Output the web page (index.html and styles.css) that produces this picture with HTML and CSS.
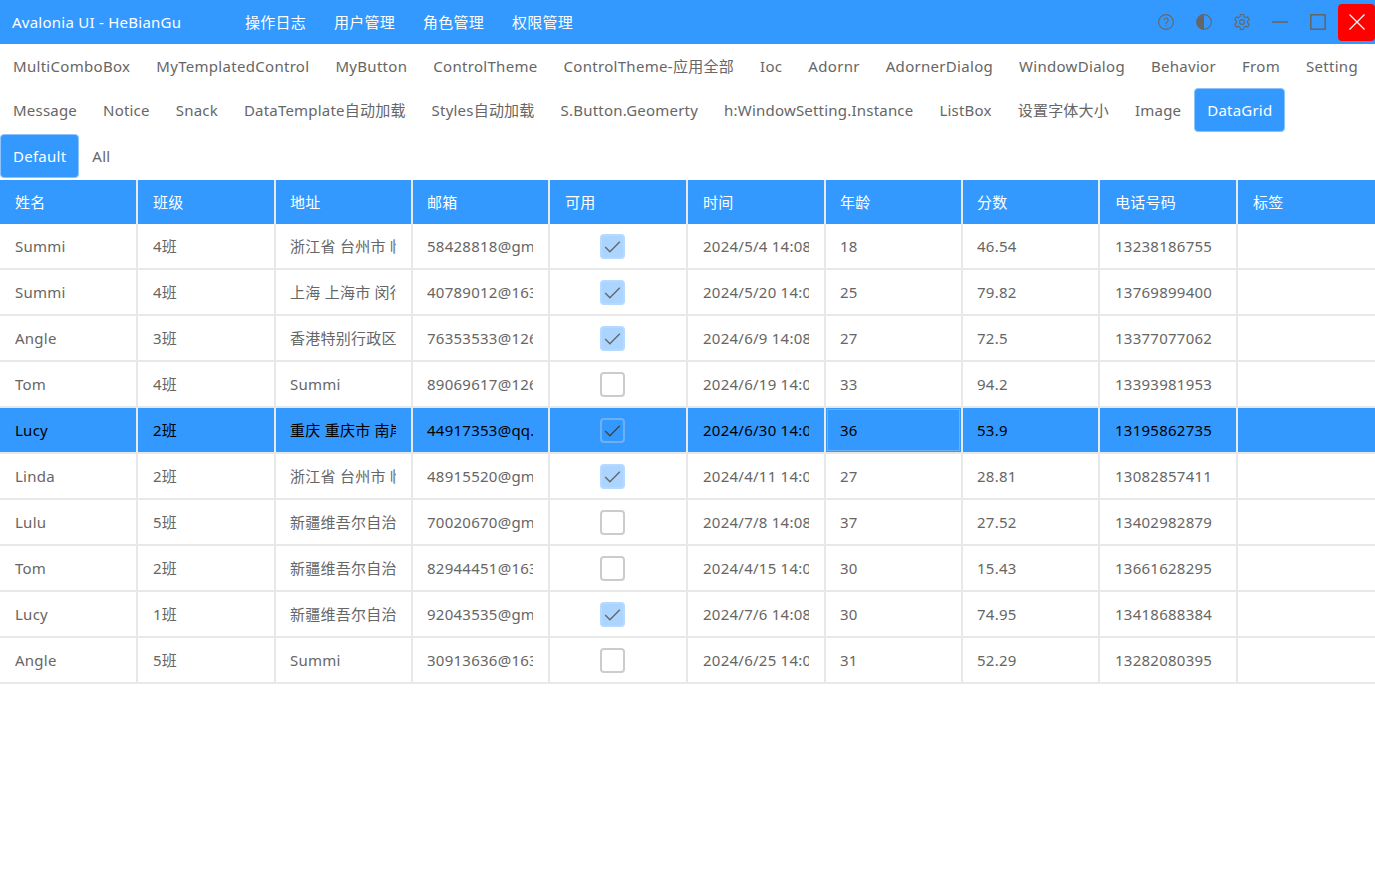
FILE: index.html
```html
<!DOCTYPE html>
<html lang="zh">
<head>
<meta charset="utf-8">
<title>Avalonia UI - HeBianGu</title>
<link rel="stylesheet" href="styles.css">
</head>
<body>
<header class="titlebar">
  <div class="title">Avalonia UI - HeBianGu</div>
  <nav class="menu"><span>操作日志</span><span>用户管理</span><span>角色管理</span><span>权限管理</span></nav>
  <div class="winbtns">
    <svg class="ico i1" viewBox="0 0 16 16"><circle cx="8" cy="8" r="7.4"/><path d="M5.900 6.200a2.100 2.100 0 1 1 3.300 1.700c-.8.500-1.200.9-1.200 1.800"/><path d="M8 11.200v1.200"/></svg>
    <svg class="ico i2" viewBox="0 0 16 16"><circle cx="8" cy="8" r="7.400"/><path class="fill" d="M8 .6a7.400 7.400 0 0 0 0 14.800z"/></svg>
    <svg class="ico i3" viewBox="0 0 16 16"><path d="M6.050 2.640L6.420.57H9.580L9.950 2.640L11.660 3.630L13.650 2.920L15.230 5.650L13.610 7.010V8.990L15.230 10.350L13.650 13.080L11.660 12.370L9.950 13.360L9.580 15.430H6.420L6.050 13.360L4.340 12.370L2.350 13.080L.77 10.350L2.390 8.990V7.010L.77 5.650L2.350 2.920L4.340 3.630Z"/><circle cx="8" cy="8" r="2.400"/></svg>
    <svg class="ico i4" viewBox="0 0 16 16"><path d="M0 8h16"/></svg>
    <svg class="ico i5" viewBox="0 0 16 16"><rect x=".8" y=".8" width="14.400" height="14.400"/></svg>
    <div class="close"><svg viewBox="0 0 16 16"><path d="M.5.500l15 15M15.500.500l-15 15"/></svg></div>
  </div>
</header>
<div class="tabs t1">
  <span>MultiComboBox</span><span>MyTemplatedControl</span><span>MyButton</span><span>ControlTheme</span><span>ControlTheme-应用全部</span><span>Ioc</span><span>Adornr</span><span>AdornerDialog</span><span>WindowDialog</span><span>Behavior</span><span>From</span><span>Setting</span>
</div>
<div class="tabs t2">
  <span>Message</span><span>Notice</span><span>Snack</span><span>DataTemplate自动加载</span><span>Styles自动加载</span><span>S.Button.Geomerty</span><span>h:WindowSetting.Instance</span><span>ListBox</span><span>设置字体大小</span><span>Image</span><span class="on">DataGrid</span>
</div>
<div class="tabs t3">
  <span class="on">Default</span><span>All</span>
</div>
<main class="grid">
  <div class="row head">
    <div class="c"><b>姓名</b></div><div class="c"><b>班级</b></div><div class="c"><b>地址</b></div><div class="c"><b>邮箱</b></div><div class="c"><b>可用</b></div><div class="c"><b>时间</b></div><div class="c"><b>年龄</b></div><div class="c"><b>分数</b></div><div class="c"><b>电话号码</b></div><div class="c"><b>标签</b></div>
  </div>
  <div class="row">
    <div class="c"><b>Summi</b></div><div class="c"><b>4班</b></div><div class="c"><b>浙江省 台州市 临海市</b></div><div class="c"><b>58428818@gmail.com</b></div><div class="c k"><i class="box yes"><svg viewBox="0 0 24 24"><path d="M5 12.500l4.500 4.500L19 7.500"/></svg></i></div><div class="c"><b>2024/5/4 14:08:12</b></div><div class="c"><b>18</b></div><div class="c"><b>46.54</b></div><div class="c"><b>13238186755</b></div><div class="c"></div>
  </div>
  <div class="row">
    <div class="c"><b>Summi</b></div><div class="c"><b>4班</b></div><div class="c"><b>上海 上海市 闵行区</b></div><div class="c"><b>40789012@163.com</b></div><div class="c k"><i class="box yes"><svg viewBox="0 0 24 24"><path d="M5 12.500l4.500 4.500L19 7.500"/></svg></i></div><div class="c"><b>2024/5/20 14:08:12</b></div><div class="c"><b>25</b></div><div class="c"><b>79.82</b></div><div class="c"><b>13769899400</b></div><div class="c"></div>
  </div>
  <div class="row">
    <div class="c"><b>Angle</b></div><div class="c"><b>3班</b></div><div class="c"><b>香港特别行政区</b></div><div class="c"><b>76353533@126.com</b></div><div class="c k"><i class="box yes"><svg viewBox="0 0 24 24"><path d="M5 12.500l4.500 4.500L19 7.500"/></svg></i></div><div class="c"><b>2024/6/9 14:08:12</b></div><div class="c"><b>27</b></div><div class="c"><b>72.5</b></div><div class="c"><b>13377077062</b></div><div class="c"></div>
  </div>
  <div class="row">
    <div class="c"><b>Tom</b></div><div class="c"><b>4班</b></div><div class="c"><b>Summi</b></div><div class="c"><b>89069617@126.com</b></div><div class="c k"><i class="box"></i></div><div class="c"><b>2024/6/19 14:08:12</b></div><div class="c"><b>33</b></div><div class="c"><b>94.2</b></div><div class="c"><b>13393981953</b></div><div class="c"></div>
  </div>
  <div class="row sel">
    <div class="c"><b>Lucy</b></div><div class="c"><b>2班</b></div><div class="c"><b>重庆 重庆市 南岸区</b></div><div class="c"><b>44917353@qq.com</b></div><div class="c k"><i class="box yes"><svg viewBox="0 0 24 24"><path d="M5 12.500l4.500 4.500L19 7.500"/></svg></i></div><div class="c"><b>2024/6/30 14:08:12</b></div><div class="c cur"><b>36</b></div><div class="c"><b>53.9</b></div><div class="c"><b>13195862735</b></div><div class="c"></div>
  </div>
  <div class="row">
    <div class="c"><b>Linda</b></div><div class="c"><b>2班</b></div><div class="c"><b>浙江省 台州市 临海市</b></div><div class="c"><b>48915520@gmail.com</b></div><div class="c k"><i class="box yes"><svg viewBox="0 0 24 24"><path d="M5 12.500l4.500 4.500L19 7.500"/></svg></i></div><div class="c"><b>2024/4/11 14:08:12</b></div><div class="c"><b>27</b></div><div class="c"><b>28.81</b></div><div class="c"><b>13082857411</b></div><div class="c"></div>
  </div>
  <div class="row">
    <div class="c"><b>Lulu</b></div><div class="c"><b>5班</b></div><div class="c"><b>新疆维吾尔自治区</b></div><div class="c"><b>70020670@gmail.com</b></div><div class="c k"><i class="box"></i></div><div class="c"><b>2024/7/8 14:08:12</b></div><div class="c"><b>37</b></div><div class="c"><b>27.52</b></div><div class="c"><b>13402982879</b></div><div class="c"></div>
  </div>
  <div class="row">
    <div class="c"><b>Tom</b></div><div class="c"><b>2班</b></div><div class="c"><b>新疆维吾尔自治区</b></div><div class="c"><b>82944451@163.com</b></div><div class="c k"><i class="box"></i></div><div class="c"><b>2024/4/15 14:08:12</b></div><div class="c"><b>30</b></div><div class="c"><b>15.43</b></div><div class="c"><b>13661628295</b></div><div class="c"></div>
  </div>
  <div class="row">
    <div class="c"><b>Lucy</b></div><div class="c"><b>1班</b></div><div class="c"><b>新疆维吾尔自治区</b></div><div class="c"><b>92043535@gmail.com</b></div><div class="c k"><i class="box yes"><svg viewBox="0 0 24 24"><path d="M5 12.500l4.500 4.500L19 7.500"/></svg></i></div><div class="c"><b>2024/7/6 14:08:12</b></div><div class="c"><b>30</b></div><div class="c"><b>74.95</b></div><div class="c"><b>13418688384</b></div><div class="c"></div>
  </div>
  <div class="row">
    <div class="c"><b>Angle</b></div><div class="c"><b>5班</b></div><div class="c"><b>Summi</b></div><div class="c"><b>30913636@163.com</b></div><div class="c k"><i class="box"></i></div><div class="c"><b>2024/6/25 14:08:12</b></div><div class="c"><b>31</b></div><div class="c"><b>52.29</b></div><div class="c"><b>13282080395</b></div><div class="c"></div>
  </div>
</main>
</body>
</html>
```
FILE: styles.css
```css
* { box-sizing: border-box; }
html, body { margin: 0; height: 100%; }
body {
  background: #fff;
  color: #666;
  font: 15px/20px "Noto Sans", "Noto Sans CJK SC", sans-serif;
  letter-spacing: .25px;
  overflow: hidden;
}
.titlebar {
  height: 44px;
  background: #3399ff;
  color: #fff;
  display: flex;
  align-items: center;
}
.title { width: 245px; padding-left: 12px; }
.menu { display: flex; gap: 28px; flex: 1; }
.winbtns { display: flex; align-items: center; }
.ico { width: 16px; height: 16px; fill: none; stroke: #666; stroke-width: 1.1; }
.ico .fill { fill: #666; stroke: none; }
.i1 { margin-right: 22px; }
.i2 { margin-right: 22px; }
.i3 { margin-right: 22px; }
.i4 { margin-right: 22px; }
.i4 path { stroke-width: 1.6; }
.i5 { margin-right: 12px; }
.i5 rect { stroke-width: 1.6; }
.close {
  width: 37px; height: 37px;
  background: #ff0000;
  border-radius: 4px;
  display: flex; align-items: center; justify-content: center;
}
.close svg { width: 16px; height: 16px; fill: none; stroke: #fff; stroke-width: 1.2; }
.tabs { display: flex; align-items: flex-start; }
.tabs span {
  height: 44px;
  padding: 0 12px;
  display: flex; align-items: center;
  border: 1px solid transparent;
  border-radius: 4px;
  white-space: nowrap;
}
.tabs .on { background: #3399ff; color: #fff; border-color: #8cc4fb; }
.t1 { height: 44px; letter-spacing: .3px; }
.t2 { height: 46px; letter-spacing: .21px; }
.t3 { height: 46px; }
.grid { display: flex; flex-direction: column; }
.row {
  display: grid;
  grid-template-columns: 138px 138px 137px 137px 138px 138px 137px 137px 138px 1fr;
  height: 46px;
}
.c {
  display: flex; align-items: center;
  padding: 0 15px;
  border-right: 2px solid #e8e8e8;
  border-bottom: 2px solid #e8e8e8;
  min-width: 0;
}
.c:nth-child(3), .c:nth-child(4), .c:nth-child(7), .c:nth-child(8) { padding-left: 14px; }
.c:last-child { border-right: 0; }
.c b { font-weight: 400; white-space: nowrap; overflow: hidden; display: block; }
.head { height: 44px; background: #3399ff; color: #fff; }
.head .c { border-bottom: 0; }
.sel { background: #3399ff; color: #000; }
.cur { box-shadow: inset 0 0 0 1px #3399ff, inset 0 0 0 2px #6cb0f7; }
.c.k { justify-content: center; padding: 0 11px 0 0; }
.box {
  width: 25px; height: 25px;
  border: 2px solid #ccc;
  border-radius: 4px;
  display: block;
  background: #fff;
}
.box svg { display: block; width: 25px; height: 25px; margin: -2px; fill: none; stroke: #666; stroke-width: 1.3; }
.box.yes { background: #abd5ff; border-color: #b6daff; }
.sel .box { background: transparent; border-color: #6cb0f7; }
.sel .box svg { stroke: #444; }
```
